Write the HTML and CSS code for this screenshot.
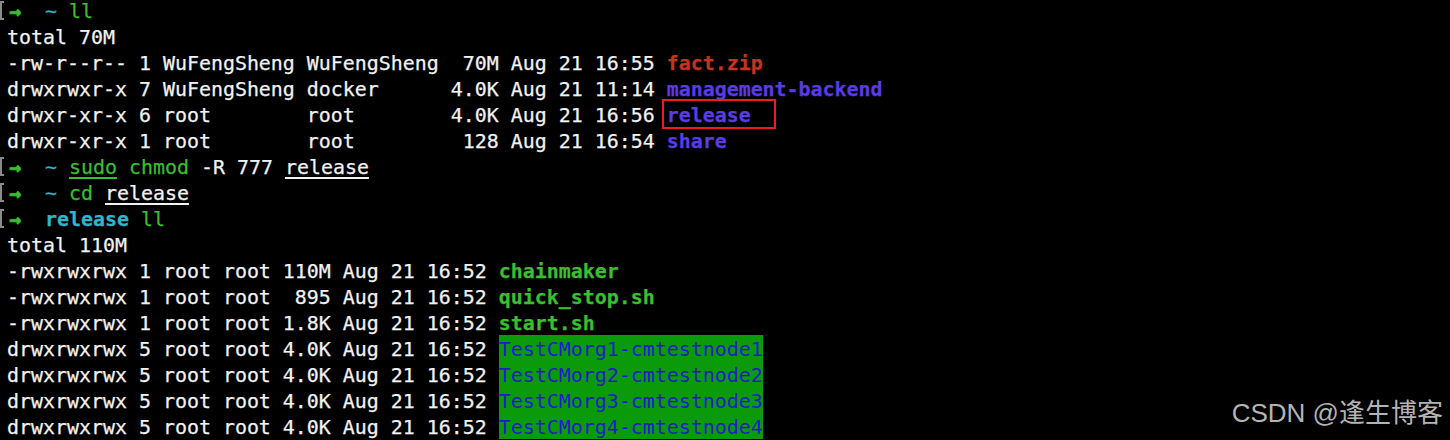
FILE: index.html
```html
<!DOCTYPE html>
<html>
<head>
<meta charset="utf-8">
<link rel="stylesheet" href="styles.css">
</head>
<body>
<div class="term">
<div class="line"><span class="br"></span><b class="g arrow">→</b>  <span class="c">~</span> <span class="g">ll</span></div>
<div class="line">total 70M</div>
<div class="line">-rw-r--r-- 1 WuFengSheng WuFengSheng  70M Aug 21 16:55 <b class="red">fact.zip</b></div>
<div class="line">drwxrwxr-x 7 WuFengSheng docker      4.0K Aug 21 11:14 <b class="dir">management-backend</b></div>
<div class="line">drwxr-xr-x 6 root        root        4.0K Aug 21 16:56 <b class="dir boxed">release</b></div>
<div class="line">drwxr-xr-x 1 root        root         128 Aug 21 16:54 <b class="dir">share</b></div>
<div class="line"><span class="br"></span><b class="g arrow">→</b>  <span class="c">~</span> <span class="g u">sudo</span> <span class="g">chmod</span> -R 777 <span class="u">release</span></div>
<div class="line"><span class="br"></span><b class="g arrow">→</b>  <span class="c">~</span> <span class="g">cd</span> <span class="u">release</span></div>
<div class="line"><span class="br"></span><b class="g arrow">→</b>  <b class="c">release</b> <span class="g">ll</span></div>
<div class="line">total 110M</div>
<div class="line">-rwxrwxrwx 1 root root 110M Aug 21 16:52 <b class="g">chainmaker</b></div>
<div class="line">-rwxrwxrwx 1 root root  895 Aug 21 16:52 <b class="g">quick_stop.sh</b></div>
<div class="line">-rwxrwxrwx 1 root root 1.8K Aug 21 16:52 <b class="g">start.sh</b></div>
<div class="line">drwxrwxrwx 5 root root 4.0K Aug 21 16:52 <span class="hl">TestCMorg1-cmtestnode1</span></div>
<div class="line">drwxrwxrwx 5 root root 4.0K Aug 21 16:52 <span class="hl">TestCMorg2-cmtestnode2</span></div>
<div class="line">drwxrwxrwx 5 root root 4.0K Aug 21 16:52 <span class="hl">TestCMorg3-cmtestnode3</span></div>
<div class="line">drwxrwxrwx 5 root root 4.0K Aug 21 16:52 <span class="hl">TestCMorg4-cmtestnode4</span></div>
</div>
<div class="watermark">CSDN @逢生博客</div>
</body>
</html>
```
FILE: styles.css
```css
html, body {
  margin: 0;
  padding: 0;
  background: #000;
  width: 1450px;
  height: 440px;
  overflow: hidden;
}
body {
  position: relative;
}
.term {
  margin-top: -1px;
  padding-left: 7px;
  font-family: "DejaVu Sans Mono", "Liberation Mono", monospace;
  font-size: 19.93px;
  color: #f2f2f2;
  -webkit-text-stroke: 0.25px currentColor;
}
.line {
  height: 26px;
  line-height: 26px;
  white-space: pre;
}
b { font-weight: bold; }
.arrow { -webkit-text-stroke: 0.6px currentColor; }
.br {
  display: inline-block;
  width: 2px;
  height: 15px;
  margin-left: -7px;
  margin-right: 5px;
  border: 2px solid #8a8a8a;
  border-right: none;
  vertical-align: -2px;
}
.g { color: #3bbf2e; }
.c { color: #2fb6c8; }
.red { color: #c8321f; }
.dir { color: #5a3be6; }
.u {
  text-decoration: underline;
  text-decoration-thickness: 2px;
  text-underline-offset: 3px;
}
.boxed { position: relative; }
.boxed::after {
  content: "";
  position: absolute;
  left: -5px;
  right: -25px;
  top: -5px;
  bottom: -2px;
  border: 2px solid #f01c1c;
}
.hl {
  display: inline-block;
  position: relative;
  top: -2px;
  background: #0a9a0a;
  color: #1c1ccc;
  height: 26px;
  line-height: 30px;
  vertical-align: top;
  -webkit-text-stroke: 0;
}
.watermark {
  position: absolute;
  right: 7px;
  top: 398px;
  font-family: "Liberation Sans", "Noto Sans CJK SC", sans-serif;
  font-size: 26px;
  color: #b4b4b4;
  line-height: 30px;
}
```
